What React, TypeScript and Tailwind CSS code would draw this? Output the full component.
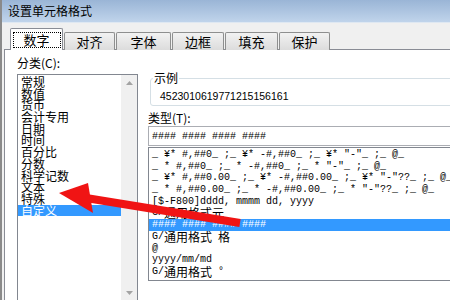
import React from 'react';

const categories = ['常规', '数值', '货币', '会计专用', '日期', '时间', '百分比', '分数', '科学记数', '文本', '特殊', '自定义'];

// each format line: [ascii part, cjk part, trailing ascii]
const formats: string[][] = [
  ['_ ¥* #,##0_ ;_ ¥* -#,##0_ ;_ ¥* "-"_ ;_ @_'],
  ['_ * #,##0_ ;_ * -#,##0_ ;_ * "-"_ ;_ @_'],
  ['_ ¥* #,##0.00_ ;_ ¥* -#,##0.00_ ;_ ¥* "-"??_ ;_ @_'],
  ['_ * #,##0.00_ ;_ * -#,##0.00_ ;_ * "-"??_ ;_ @_'],
  ['[$-F800]dddd, mmmm dd, yyyy'],
  ['G/', '通用格式元'],
  ['#### #### #### ####'],
  ['G/', '通用格式', ' ', '格'],
  ['@'],
  ['yyyy/mm/md'],
  ['G/', '通用格式', ' °'],
];

const tabs = [
  { label: '对齐', w: 'w-[51px]' },
  { label: '字体', w: 'w-[55px]' },
  { label: '边框', w: 'w-[52px]' },
  { label: '填充', w: 'w-[53px]' },
  { label: '保护', w: 'w-[51px]' },
];

const cjk = "font-['Noto_Sans_CJK_SC',sans-serif]";

const FormatLine: React.FC<{ parts: string[]; selected?: boolean }> = ({ parts, selected }) => (
  <div
    className={`h-[11.7px] leading-[11.7px] whitespace-pre pl-[3px] flex items-center ${
      selected ? 'bg-[#3399ff] text-white' : 'text-black'
    }`}
  >
    {parts.map((p, i) =>
      /[\u4e00-\u9fff]/.test(p) ? (
        <span key={i} className={`${cjk} text-[12px] leading-[11.7px]`}>
          {p}
        </span>
      ) : (
        <span key={i} className="font-['Liberation_Mono',monospace] text-[10px] leading-[11.7px]">
          {p}
        </span>
      )
    )}
  </div>
);

export default function App() {
  return (
    <div className={`relative w-[450px] h-[300px] overflow-hidden bg-[#f0f0f0] border-l-2 border-[#8a8a8a] ${cjk}`}>
      {/* title bar */}
      <div className="h-[23px] flex items-center pl-[6px] text-[12px] text-black bg-gradient-to-b from-[#9ab5d6] to-[#c0d4eb] border-b border-[#dfe8f2]">
        设置单元格格式
      </div>

      <div className="pl-[2px]">
        {/* tabs */}
        <div className="flex items-end h-[27px] pl-[6px]">
          <div className="relative z-10 w-[53px] h-[22px] bg-white border border-b-0 border-[#898c95] rounded-t-[2px] flex items-center justify-center">
            <span className="border border-dotted border-black w-[48px] h-[16px] flex items-center justify-center text-[13px] leading-none">
              数字
            </span>
          </div>
          {tabs.map((t) => (
            <div
              key={t.label}
              className={`${t.w} h-[18px] ml-[1px] bg-gradient-to-b from-[#f2f2f2] to-[#dcdcdc] border border-b-0 border-[#8e8f8f] rounded-t-[2px] flex items-center justify-center text-[13px] leading-none`}
            >
              {t.label}
            </div>
          ))}
        </div>

        {/* tab page */}
        <div className="-mt-px h-[260px] bg-white border-t border-l border-[#898c95] flex gap-[10px] pl-[12px]">
          {/* category column */}
          <div className="w-[121px] shrink-0">
            <div className="mt-[6px] text-[12px] leading-[14px] text-black">分类(C):</div>
            <div className="mt-[4px] h-[232px] border border-[#828790] flex bg-white">
              <div className="flex-1 pt-[1px]">
                {categories.map((c) => (
                  <div
                    key={c}
                    className={`h-[11.7px] leading-[11.7px] text-[12px] pl-[3px] whitespace-nowrap ${
                      c === '自定义' ? 'bg-[#3399ff] text-white' : 'text-black'
                    }`}
                  >
                    {c}
                  </div>
                ))}
              </div>
              <div className="w-[16px] bg-[#f0f0f0] flex flex-col items-center justify-between py-[6px]">
                <svg width="7" height="4" viewBox="0 0 7 4">
                  <path d="M0 4 L3.5 0 L7 4 Z" fill="#a3a3a3" />
                </svg>
                <svg width="7" height="4" viewBox="0 0 7 4" className="mb-[4px]">
                  <path d="M0 0 L3.5 4 L7 0 Z" fill="#a3a3a3" />
                </svg>
              </div>
            </div>
          </div>

          {/* right column */}
          <div className="w-[320px] shrink-0">
            <fieldset className="mt-[21px] ml-[2px] border border-[#d5dfe5] rounded-[3px] pl-[9px] pb-[2px]">
              <legend className="text-[12px] leading-[14px] text-black ml-[-7px] px-[1px]">示例</legend>
              <div className="mt-[4px] text-[10.5px] leading-[14px] text-black font-['Liberation_Sans',sans-serif]">
                4523010619771215156161
              </div>
            </fieldset>

            <div className="mt-[5px] text-[12px] leading-[14px] text-black">类型(T):</div>

            <div className="mt-[1px] h-[20px] border border-[#abadb3] flex items-center pl-[3px] font-['Liberation_Mono',monospace] text-[10px] whitespace-pre">
              #### #### #### ####
            </div>

            <div className="mt-[1px] h-[134px] border border-[#828790] pt-[1px]">
              {formats.map((f, i) => (
                <FormatLine key={i} parts={f} selected={i === 6} />
              ))}
            </div>
          </div>
        </div>
      </div>

      {/* red annotation arrow */}
      <svg className="absolute left-0 top-0 pointer-events-none" width="450" height="300" viewBox="0 0 450 300">
        <line x1="84" y1="198" x2="238" y2="223" stroke="#f01414" strokeWidth="8" />
        <polygon points="57,193 86,183 91,213" fill="#f01414" />
      </svg>
    </div>
  );
}
